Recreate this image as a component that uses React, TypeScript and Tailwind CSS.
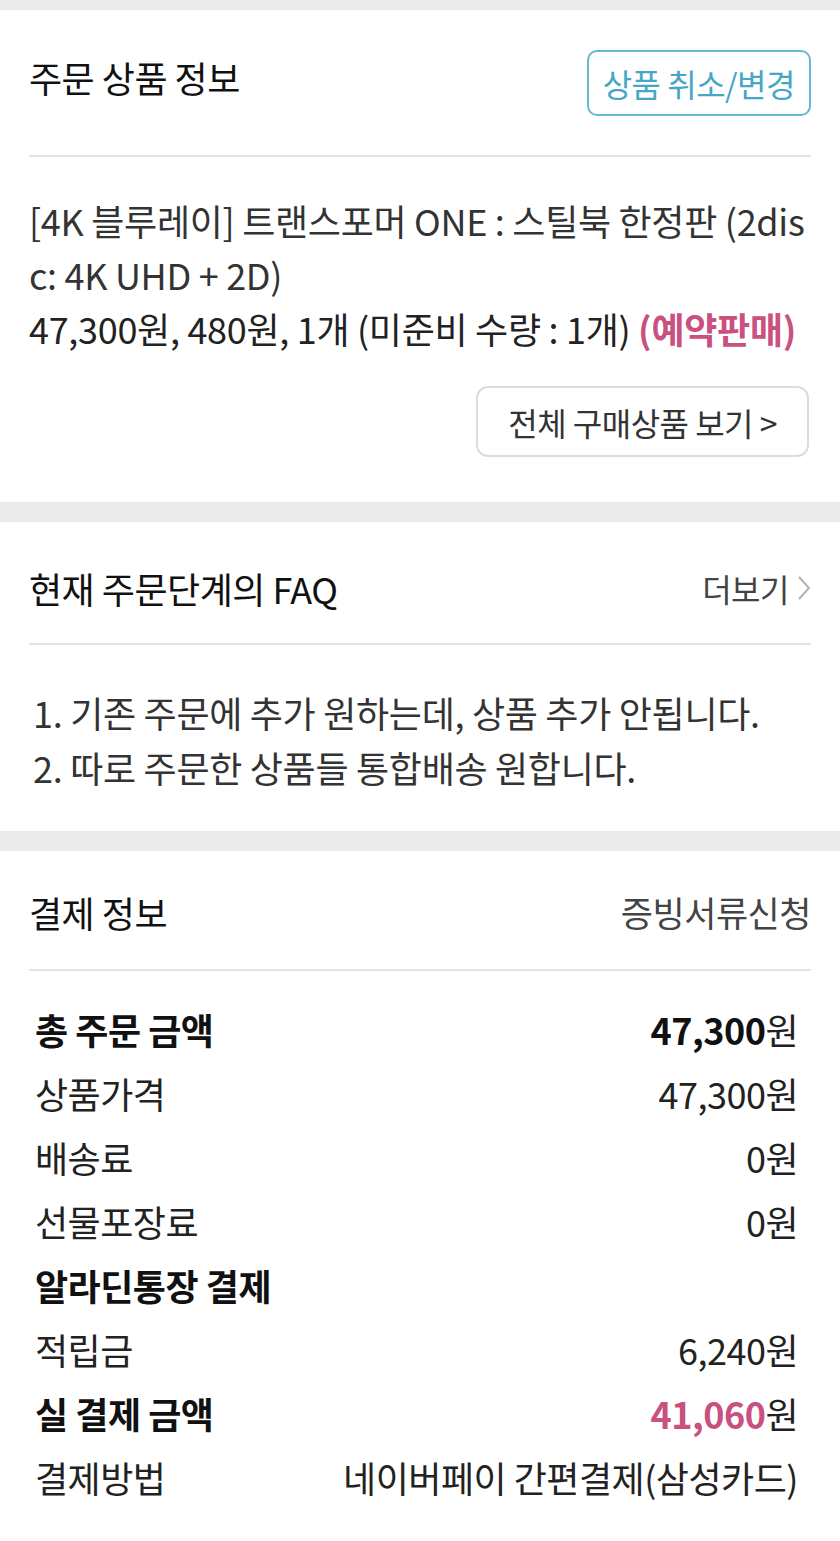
import type { ReactNode } from "react";

const FONT = "font-['Noto_Sans_CJK_KR','Noto_Sans',sans-serif]";

function Divider() {
  return <div className="h-[2px] bg-[#e3e3e3]" />;
}

function Gap() {
  return <div className="h-[20px] bg-[#ebebeb]" />;
}

function Row({
  label,
  value,
  strong,
  unit = "원",
  accent,
}: {
  label: string;
  value?: ReactNode;
  strong?: boolean;
  unit?: string;
  accent?: boolean;
}) {
  return (
    <div className="flex h-[64px] items-center justify-between pl-[6px] pr-[13px]">
      <span className={`text-[36px] tracking-[-0.5px] ${strong ? "font-bold text-[#111]" : "text-[#222]"}`}>
        {label}
      </span>
      {value !== undefined && (
        <span className="text-[36px] tracking-[-0.5px] text-[#222]">
          <span className={strong ? `font-bold ${accent ? "text-[#c9507f]" : "text-[#111]"}` : ""}>{value}</span>
          {unit}
        </span>
      )}
    </div>
  );
}

export default function App() {
  return (
    <div className={`${FONT} min-h-[1541px] w-[840px] bg-white`}>
      <div className="h-[10px] bg-[#ebebeb]" />

      {/* 주문 상품 정보 */}
      <section className="px-[29px]">
        <div className="flex h-[145px] items-center justify-between">
          <h2 className="-mt-[12px] text-[36px] tracking-[-0.5px] text-[#111]">주문 상품 정보</h2>
          <button className="h-[66px] rounded-[10px] border-2 border-[#67b9cf] px-[14px] text-[32px] tracking-[-0.5px] text-[#47a6c6]">
            상품 취소/변경
          </button>
        </div>
        <Divider />
        <div className="pt-[36px] text-[36px] leading-[54px] tracking-[-0.3px] text-[#333]">
          <p>
            [4K 블루레이] 트랜스포머 ONE : 스틸북 한정판 (2dis
            <br />
            c: 4K UHD + 2D)
          </p>
          <p className="text-[#222]">
            47,300원, 480원, 1개 (미준비 수량 : 1개){" "}
            <span className="font-bold text-[#c9507f]">(예약판매)</span>
          </p>
        </div>
        <div className="flex justify-end pb-[45px] pt-[31px]">
          <button className="mr-[2px] h-[71px] rounded-[12px] border-2 border-[#dcdcdc] px-[30px] text-[32px] tracking-[-0.5px] text-[#333]">
            전체 구매상품 보기 &gt;
          </button>
        </div>
      </section>

      <Gap />

      {/* FAQ */}
      <section className="px-[29px]">
        <div className="flex h-[121px] items-center justify-between pt-[11px]">
          <h2 className="text-[36px] tracking-[-0.5px] text-[#111]">현재 주문단계의 FAQ</h2>
          <span className="flex items-center gap-[8px] text-[32px] tracking-[-0.5px] text-[#444]">
            더보기
            <svg width="14" height="28" viewBox="0 0 14 28" fill="none">
              <polyline points="2,3 12,14 2,25" stroke="#b5b5b5" strokeWidth="2" />
            </svg>
          </span>
        </div>
        <Divider />
        <ol className="pb-[36px] pl-[4px] pt-[40px] text-[36px] leading-[55px] tracking-[-0.3px] text-[#333]">
          <li>1. 기존 주문에 추가 원하는데, 상품 추가 안됩니다.</li>
          <li>2. 따로 주문한 상품들 통합배송 원합니다.</li>
        </ol>
      </section>

      <Gap />

      {/* 결제 정보 */}
      <section className="px-[29px] pb-[30px]">
        <div className="flex h-[118px] items-center justify-between pt-[4px]">
          <h2 className="text-[36px] tracking-[-0.5px] text-[#111]">결제 정보</h2>
          <span className="text-[35px] tracking-[-0.5px] text-[#444]">증빙서류신청</span>
        </div>
        <Divider />
        <div className="pt-[26px]">
          <Row label="총 주문 금액" value="47,300" strong />
          <Row label="상품가격" value="47,300" />
          <Row label="배송료" value="0" />
          <Row label="선물포장료" value="0" />
          <Row label="알라딘통장 결제" strong />
          <Row label="적립금" value="6,240" />
          <Row label="실 결제 금액" value="41,060" strong accent />
          <Row label="결제방법" value="네이버페이 간편결제(삼성카드)" unit="" />
        </div>
      </section>
    </div>
  );
}
